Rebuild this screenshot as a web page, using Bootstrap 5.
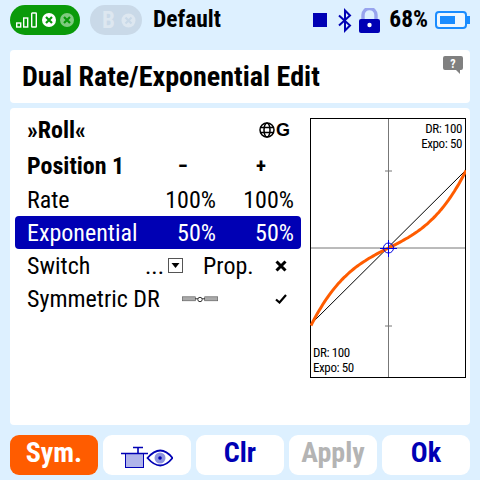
<!DOCTYPE html>
<html lang="en">
<head>
  <meta charset="UTF-8">
  <meta name="viewport" content="width=device-width, initial-scale=1">
  <title>Dual Rate/Exponential Edit</title>
  <link href="https://cdn.jsdelivr.net/npm/bootstrap@5.3.2/dist/css/bootstrap.min.css" rel="stylesheet">
  <style>
    body {
      background: #ddf0ff;
      font-family: Roboto, "Liberation Sans", sans-serif;
      font-stretch: condensed;
      color: #000;
      width: 480px;
      height: 480px;
      overflow: hidden;
      padding: 5px 10px;
    }
    .top-bar { height: 30px; }
    .pill-green { width: 70px; height: 30px; background: #0a9a0a; border-radius: 15px; padding-left: 6px; gap: 4px; }
    .pill-off { width: 52px; height: 30px; background: #c9d9e8; border-radius: 15px; margin-left: 10px; padding-left: 12px; }
    .pill-off b { color: #dde7f0; font-size: 23px; line-height: 1; margin-right: 6px; }
    .model-name { font-size: 23.5px; font-weight: 700; margin-left: 11px; }
    .batt-text { font-size: 23.5px; font-weight: 700; margin: 0 7px 0 9px; }
    .bt-icon { margin-left: 11px; }
    .lock-icon { margin-left: 7px; }
    .title-box { height: 53px; margin-top: 15px; border-radius: 4px; padding-left: 12px; position: relative; }
    .title-box h1 { font-size: 28.1px; font-weight: 700; margin: 0; }
    .help-icon { position: absolute; top: 6px; right: 7px; }
    .main-box { height: 317px; margin-top: 5px; border-radius: 4px; padding: 7px 0 0 5px; }
    .list-side { width: 286px; }
    .param-row {
      display: grid;
      grid-template-columns: minmax(0, 1fr) 78px 78px;
      height: 33px;
      padding: 0 7px 0 12px;
      align-items: center;
      font-size: 24px;
      line-height: 24px;
      white-space: nowrap;
    }
    .param-row.head { font-weight: 700; padding-bottom: 1px; }
    .param-row.top-head { margin-bottom: 2px; padding-bottom: 3px; }
    .param-row.sel { background: #0000b4; color: #fff; border-radius: 4px; }
    .dash-cell { padding-right: 28px; font-size: 21px; }
    .wide-cell { grid-column: 2 / 4; }
    .dots { margin-left: 7px; width: 16px; }
    .drop-icon { margin-left: 7px; }
    .prop-text { margin-left: 20px; }
    .slider-icon { margin-left: 44px; }
    .mark-icon { margin-right: 7px; }
    .scope-g { font-family: "Liberation Sans", sans-serif; font-stretch: normal; font-size: 18px; line-height: 1; margin: 0 4px 0 1px; }
    .graph-side { margin: 3px 0 0 9px; line-height: 0; }
    .graph-side text { font-size: 13px; font-family: Roboto, sans-serif; font-stretch: condensed; letter-spacing: -.4px; }
    .foot-bar { display: grid; grid-template-columns: repeat(5, 88px); gap: 5px; margin-top: 10px; }
    .foot-btn {
      height: 40px;
      padding: 0 0 5px;
      border: 0;
      border-radius: 9px;
      background: #fff;
      color: #0000b4;
      font-size: 28px;
      font-stretch: condensed;
      font-weight: 700;
      line-height: 35px;
    }
    .foot-btn.on, .foot-btn.on:hover { background: #ff5c00; color: #fff; }
    .foot-btn:disabled { background: #fff; color: #b4b4b4; opacity: 1; }
    .foot-btn.icon-btn { padding: 3px 0 0; }
  </style>
</head>
<body>
  <!-- top status bar -->
  <div class="top-bar d-flex align-items-center">
    <div class="pill-green d-flex align-items-center">
      <svg width="22" height="16" viewBox="0 0 22 16">
        <g fill="none" stroke="#fff" stroke-width="1.4">
          <rect x=".7" y="11" width="4" height="4"/>
          <rect x="7.700" y="6" width="4" height="9"/>
          <rect x="15.700" y="1" width="4.600" height="14" rx=".6"/>
        </g>
      </svg>
      <svg width="14" height="14" viewBox="0 0 14 14"><circle cx="7" cy="7" r="7" fill="#fff"/><path d="M4 4l6 6M10 4l-6 6" stroke="#0a9a0a" stroke-width="2.2"/></svg>
      <svg width="14" height="14" viewBox="0 0 14 14"><circle cx="7" cy="7" r="7" fill="#7fca7f"/><path d="M4 4l6 6M10 4l-6 6" stroke="#0a9a0a" stroke-width="2.2"/></svg>
    </div>
    <div class="pill-off d-flex align-items-center">
      <b>B</b>
      <svg width="15" height="15" viewBox="0 0 15 15"><circle cx="7.5" cy="7.5" r="7" fill="#dde7f0"/><path d="M4.5 4.5l6 6M10.5 4.5l-6 6" stroke="#c9d9e8" stroke-width="2.2"/></svg>
    </div>
    <span class="model-name">Default</span>
    <div class="ms-auto d-flex align-items-center">
      <svg width="14" height="14" viewBox="0 0 14 14"><rect width="14" height="14" fill="#0000b4"/></svg>
      <svg class="bt-icon" width="14" height="25" viewBox="0 0 14 24"><path d="M1 7l11 10-5 5V2l5 5L1 17" fill="none" stroke="#0000b4" stroke-width="2"/></svg>
      <svg class="lock-icon" width="21" height="25" viewBox="0 0 21 25">
        <path d="M4 11V7a6.5 6.5 0 0 1 13 0v4" fill="none" stroke="#98a4ee" stroke-width="3.4"/>
        <rect y="11" width="21" height="14" rx="2" fill="#0000b4"/>
        <circle cx="10.500" cy="17" r="2.200" fill="#fff"/>
      </svg>
      <span class="batt-text">68%</span>
      <svg width="35" height="18" viewBox="0 0 35 18">
        <rect x="1" y="1" width="30" height="16" rx="3" fill="#eef7ff" stroke="#1a8cff" stroke-width="2"/>
        <rect x="5" y="5" width="15" height="8" fill="#1a8cff"/>
        <rect x="32" y="5" width="3" height="8" fill="#1a8cff"/>
      </svg>
    </div>
  </div>

  <!-- page title -->
  <div class="title-box bg-white d-flex align-items-center">
    <h1>Dual Rate/Exponential Edit</h1>
    <svg class="help-icon" width="20" height="18" viewBox="0 0 20 18">
      <path d="M2 0h16a2 2 0 0 1 2 2v10a2 2 0 0 1-2 2h-1v4l-4-4H2a2 2 0 0 1-2-2V2a2 2 0 0 1 2-2z" fill="#808080"/>
      <text x="10" y="12" text-anchor="middle" font-size="12" font-weight="700" fill="#fff">?</text>
    </svg>
  </div>

  <!-- params and curve -->
  <div class="main-box bg-white d-flex">
    <div class="list-side">
      <div class="param-row head top-head">
        <span>»Roll«</span>
        <span class="wide-cell d-flex justify-content-end align-items-center">
          <svg width="16" height="16" viewBox="0 0 16 16">
            <g fill="none" stroke="#000" stroke-width="1.500">
              <circle cx="8" cy="8" r="7"/>
              <ellipse cx="8" cy="8" rx="3" ry="7"/>
              <path d="M1 5.500h14M1 10.500h14"/>
            </g>
          </svg>
          <span class="scope-g">G</span>
        </span>
      </div>
      <div class="param-row head">
        <span>Position 1</span>
        <span class="text-end dash-cell">−</span>
        <span class="text-end dash-cell">+</span>
      </div>
      <div class="param-row">
        <span>Rate</span>
        <span class="text-end">100%</span>
        <span class="text-end">100%</span>
      </div>
      <div class="param-row sel">
        <span>Exponential</span>
        <span class="text-end">50%</span>
        <span class="text-end">50%</span>
      </div>
      <div class="param-row">
        <span>Switch</span>
        <span class="wide-cell d-flex align-items-center">
          <span class="dots">...</span>
          <svg class="drop-icon" width="15" height="15" viewBox="0 0 15 15"><rect x=".5" y=".5" width="14" height="14" fill="#fff" stroke="#555"/><path d="M3.500 5h8l-4 5z" fill="#000"/></svg>
          <span class="prop-text">Prop.</span>
          <svg class="ms-auto mark-icon" width="12" height="12" viewBox="0 0 12 12"><path d="M1.500 1.500l9 9M10.500 1.500l-9 9" stroke="#000" stroke-width="3"/></svg>
        </span>
      </div>
      <div class="param-row">
        <span>Symmetric DR</span>
        <span class="wide-cell d-flex align-items-center">
          <svg class="slider-icon" width="36" height="10" viewBox="0 0 36 10">
            <rect x=".3" y="2.800" width="13" height="4" fill="#aaa" stroke="#555" stroke-width=".6"/>
            <rect x="22.700" y="2.800" width="13" height="4" fill="#aaa" stroke="#555" stroke-width=".6"/>
            <path d="M13 4.800h10" stroke="#333"/>
            <circle cx="18" cy="5.500" r="2.200" fill="#fff" stroke="#333"/>
          </svg>
          <svg class="ms-auto mark-icon" width="12" height="10" viewBox="0 0 12 10"><path d="M1 5.500l3.500 3L11 1" fill="none" stroke="#000" stroke-width="2.200"/></svg>
        </span>
      </div>
    </div>
    <div class="graph-side">
      <svg width="156" height="260" viewBox="0 0 156 260">
        <rect x=".5" y=".5" width="155" height="259" fill="#fff" stroke="#000"/>
        <path d="M78.500 1v258M1 130h154" stroke="#777"/>
        <path d="M75 53h7M75 208h7" stroke="#777"/>
        <path d="M0 207L156 52" stroke="#000"/>
        <path id="expoCurve" d="" fill="none" stroke="#ff5c00" stroke-width="3"/>
        <circle cx="78.500" cy="130" r="5" fill="none" stroke="#0000e0"/>
        <path d="M70 130.500h17M78.500 122v17" stroke="#0000e0"/>
        <text x="152" y="15" text-anchor="end">DR: 100</text>
        <text x="152" y="30" text-anchor="end">Expo: 50</text>
        <text x="3" y="239">DR: 100</text>
        <text x="3" y="254">Expo: 50</text>
      </svg>
    </div>
  </div>

  <!-- bottom buttons -->
  <div class="foot-bar">
    <button type="button" class="btn foot-btn on">Sym.</button>
    <button type="button" class="btn foot-btn icon-btn d-flex justify-content-center align-items-center">
      <svg width="52" height="22" viewBox="0 0 52 22">
        <rect x="4.500" y="7.500" width="18" height="14" fill="#b0b4ea" stroke="#0000b4"/>
        <path d="M0 7.500h27M17 7V1.500M12 1.500h10" stroke="#0000b4" stroke-width="1.600"/>
        <path d="M26.500 12q13-15 25 0q-12 15-25 0z" fill="#fff" stroke="#0000b4" stroke-width="1.800"/>
        <circle cx="39" cy="12" r="5.500" fill="#8e94e0"/>
        <circle cx="39" cy="12" r="1.800" fill="#0000b4"/>
      </svg>
    </button>
    <button type="button" class="btn foot-btn">Clr</button>
    <button type="button" class="btn foot-btn" disabled>Apply</button>
    <button type="button" class="btn foot-btn">Ok</button>
  </div>

  <script>
    // expo curve: y = x * (1 - e) + x^3 * e, e = 50%
    var pts = [];
    for (var i = -40; i <= 40; i++) {
      var t = i / 40;
      var y = 0.5 * t + 0.5 * t * t * t;
      pts.push((78.5 + t * 77.5).toFixed(1) + ' ' + (130 - y * 77.5).toFixed(1));
    }
    document.getElementById('expoCurve').setAttribute('d', 'M' + pts.join('L'));
  </script>
  <script src="https://cdn.jsdelivr.net/npm/bootstrap@5.3.2/dist/js/bootstrap.bundle.min.js"></script>
</body>
</html>
